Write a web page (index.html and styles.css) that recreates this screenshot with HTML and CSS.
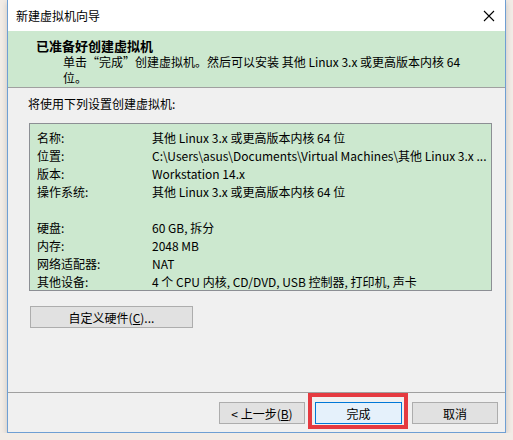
FILE: index.html
```html
<!DOCTYPE html>
<html lang="zh-CN">
<head>
  <meta charset="UTF-8">
  <title>新建虚拟机向导</title>
  <link rel="stylesheet" href="styles.css">
</head>
<body>
  <div class="window">
    <div class="titlebar">
      <span>新建虚拟机向导</span>
      <svg class="close" width="12" height="12" viewBox="0 0 12 12">
        <path d="M1 1 L11 11 M11 1 L1 11" stroke="#000" stroke-width="1.1" fill="none"/>
      </svg>
    </div>

    <div class="header">
      <h1>已准备好创建虚拟机</h1>
      <p>单击“完成”创建虚拟机。然后可以安装 其他 Linux 3.x 或更高版本内核 64 位。</p>
    </div>

    <div class="content">
      <p class="intro">将使用下列设置创建虚拟机:</p>
      <div class="summary">
        <span>名称:</span><span>其他 Linux 3.x 或更高版本内核 64 位</span>
        <span>位置:</span><span>C:\Users\asus\Documents\Virtual Machines\其他 Linux 3.x ...</span>
        <span>版本:</span><span>Workstation 14.x</span>
        <span>操作系统:</span><span>其他 Linux 3.x 或更高版本内核 64 位</span>
        <span class="blank"></span><span class="blank"></span>
        <span>硬盘:</span><span>60 GB, 拆分</span>
        <span>内存:</span><span>2048 MB</span>
        <span>网络适配器:</span><span>NAT</span>
        <span>其他设备:</span><span>4 个 CPU 内核, CD/DVD, USB 控制器, 打印机, 声卡</span>
      </div>
      <button class="btn custom">自定义硬件(<u>C</u>)...</button>
    </div>

    <div class="footer">
      <button class="btn">&lt;&nbsp;上一步(<u>B</u>)</button>
      <button class="btn default">完成</button>
      <button class="btn">取消</button>
      <span class="mark"></span>
    </div>
  </div>
</body>
</html>
```

FILE: styles.css
```css
body {
  margin: 0;
  background-color: #f2ece6;
  font-family: "Noto Sans CJK SC", "Liberation Sans", sans-serif;
  font-size: 12px;
  color: #000;
}

.window {
  margin-left: 7px;
  width: 497px;
  height: 432px;
  border: 1px solid #6f9fd3;
  border-top: none;
  background-color: #f0f0f0;
  display: flex;
  flex-direction: column;
  box-shadow: 0 2px 6px rgba(0, 0, 0, 0.18);
}

.titlebar {
  height: 31px;
  background-color: #fff;
  display: flex;
  align-items: center;
  justify-content: space-between;
  padding: 0 10px 0 8px;
  font-size: 12px;
}

.header {
  background-color: #cce8cf;
  padding: 7px 0 0 28px;
  height: 49px;
  border-bottom: 1px solid #a0a0a0;
}

.header h1 {
  margin: 0;
  font-size: 13px;
  font-weight: bold;
  line-height: 16px;
}

.header p {
  margin: 0 0 0 27px;
  width: 400px;
  line-height: 16px;
}

.content {
  flex: 1;
  padding: 8px 13px 0 21px;
}

.intro {
  margin: 0 0 11px -1px;
  line-height: 16px;
}

.summary {
  display: grid;
  grid-template-columns: 115px 1fr;
  grid-auto-rows: 18px;
  align-items: center;
  background-color: #cce8cf;
  border: 1px solid #8c8f94;
  padding: 4px 4px 0 7px;
  height: 162px;
}

.summary span {
  white-space: nowrap;
}

.btn {
  font-family: inherit;
  font-size: 12px;
  height: 22px;
  background-color: #e1e1e1;
  border: 1px solid #adadad;
  padding: 0;
  color: #000;
}

.custom {
  margin: 15px 0 0 1px;
  width: 163px;
}

.footer {
  position: relative;
  height: 30px;
  border-top: 1px solid #a0a0a0;
  padding: 9px 7px 0 0;
  display: flex;
  justify-content: flex-end;
  gap: 10px;
}

.footer .btn {
  width: 86px;
}

.footer .default {
  width: 87px;
  background-color: #e5f1fb;
  border-color: #0078d7;
}

/* red box drawn round the finish button */
.mark {
  position: absolute;
  left: 300px;
  top: 0;
  width: 92px;
  height: 28px;
  border: 4px solid #e53a40;
}
```
